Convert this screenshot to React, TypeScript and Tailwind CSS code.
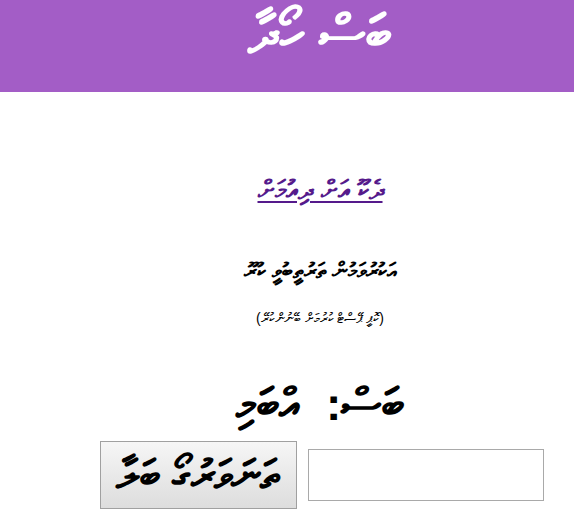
export default function App() {
  return (
    <div className="w-full overflow-hidden bg-white font-['Liberation_Sans',sans-serif]">
      <div className="w-[640px]">
        <header className="h-[92px] bg-[#a35dc6] flex justify-center pt-[2px]">
          <h1 dir="rtl" className="text-white text-[53px] font-bold leading-[64px]">ބަސް ހޯދާ</h1>
        </header>
        <div dir="rtl" className="flex flex-col items-center">
          <a href="#" className="mt-[80px] text-[27px] font-bold leading-[36px] text-[#551a8b] underline">ދެކޫ އަށް ދިއުމަށް</a>
          <p className="mt-[48px] text-[22px] font-bold leading-[30px] text-black">އަކުރުވަމުން ތަރުތީބުވީ ކުރޫ</p>
          <p className="mt-[22px] text-[14px] leading-[20px] text-black">(ކޮޕީ ޕޭސްޓް ކުރުމަށް ބޭނުންކުރޭ)</p>
          <div className="mt-[48px] text-[46px] font-bold leading-[56px] text-black">ބަސް:&nbsp; އްބަމި</div>
          <div className="mt-[9px] ml-[3px] flex items-center gap-[11px]">
            <input type="text" className="w-[236px] h-[52px] border border-[#a9a9a9] bg-white outline-none" />
            <button className="w-[197px] h-[68px] border border-[#a0a0a0] bg-gradient-to-b from-[#f6f6f6] to-[#dddddd] text-[42px] font-bold text-black leading-[44px]">ތަނަވަރުގޯ ބަލާ</button>
          </div>
        </div>
      </div>
    </div>
  );
}
